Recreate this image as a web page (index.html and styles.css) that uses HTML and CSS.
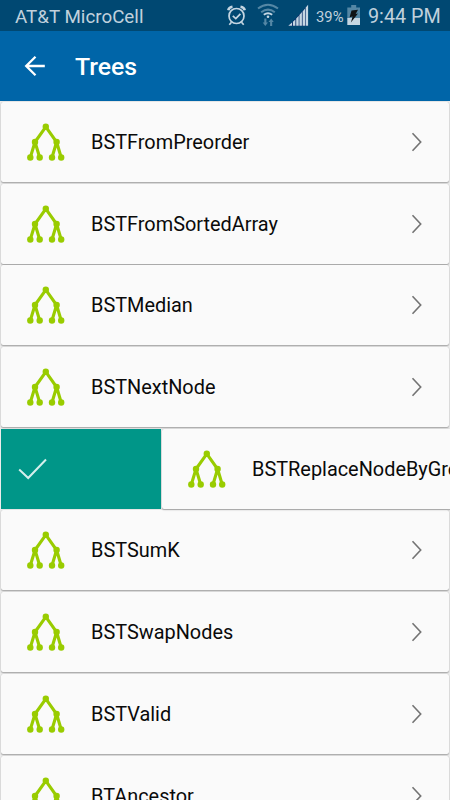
FILE: index.html
```html
<!DOCTYPE html>
<html lang="en">
<head>
<meta charset="utf-8">
<title>Trees</title>
<link rel="stylesheet" href="styles.css">
</head>
<body>
<svg class="defs" width="0" height="0">
  <symbol id="tree" viewBox="0 0 40 40">
    <path d="M19.8 4.8 9 20 4.3 35.5M9 20l4.7 15.5M19.8 4.8 30.6 20 26 35.5M30.6 20l4.6 15.5" fill="none" stroke="#99cc00" stroke-width="3.1"/>
    <g fill="#99cc00"><circle cx="19.8" cy="4.8" r="3.2"/><circle cx="9" cy="20" r="3.2"/><circle cx="30.6" cy="20" r="3.2"/><circle cx="4.3" cy="35.5" r="3.2"/><circle cx="13.7" cy="35.5" r="3.2"/><circle cx="26" cy="35.5" r="3.2"/><circle cx="35.2" cy="35.5" r="3.2"/></g>
  </symbol>
  <symbol id="chevron" viewBox="0 0 12 20"><path d="M1.5 1.3 9.7 10 1.5 18.7" fill="none" stroke="#737373" stroke-width="1.6"/></symbol>
</svg>
<div class="screen">
  <div class="status">
    <span class="carrier">AT&amp;T MicroCell</span>
    <svg class="indicators" width="84" height="31" viewBox="226 0 84 31">
      <g fill="none" stroke="#c5d6e2" stroke-width="1.7">
        <circle cx="236.5" cy="16" r="7.5"/>
        <path d="M232.8 15.8l3 2.8 4.6-4.8M231.5 22.3l-2.2 2.5M241.5 22.3l2.2 2.5"/>
        <path d="M228.3 10.2q.6-3 4.2-3.5M244.7 10.2q-.6-3-4.2-3.5" stroke-width="2.6"/>
      </g>
      <g fill="none" stroke-width="2">
        <path d="M258 8.5q10-7.6 20 0M261.2 12.2q6.8-5.2 13.6 0" stroke="#5487a5"/>
        <path d="M263.8 14.7q4.2-3 8.4 0" stroke="#c5d6e2"/>
      </g>
      <circle cx="268" cy="16.8" r="1.3" fill="#c5d6e2"/>
      <path d="M264.3 18.5h2.1v4h1.6l-2.7 3.5-2.6-3.5h1.6zM270.1 26h2.1v-4h1.5l-2.5-3.5-2.7 3.5h1.6z" fill="#5487a5"/>
      <path d="M288.5 26 308 5v21z" fill="#062b66"/>
      <path d="M288.3 25.8l3.7-3.2v3.2zM292.9 21.8l2.5-2.2v6.2h-2.5zM296.2 18.5l2.5-2.7v10h-2.5zM299.4 15.1l2.5-3v13.7h-2.5zM302.6 11.4l2.5-3v17.4h-2.5zM305.7 7.6l2.4-2.8v21h-2.4z" fill="#c5d6e2"/>
    </svg>
    <span class="percent">39%</span>
    <svg class="battery" width="14" height="21" viewBox="0 0 14 21">
      <path d="M4.2 0h5v2.5H13v11H.3v-11h3.9z" fill="#5487a5"/>
      <path d="M.3 13h12.7v7H.3z" fill="#c5d6e2"/>
      <path d="M4.5 5.5 11 4.8 8.7 9l2.3-.5L3.9 17.6 5.6 11.5l-3 .7z" fill="#101416"/>
    </svg>
    <span class="clock">9:44 PM</span>
  </div>
  <header class="toolbar">
    <svg class="back" width="22" height="22" viewBox="0 0 22 22"><path d="M20.8 11H2.3M11.5 1.7 2.2 11l9.3 9.3" fill="none" stroke="#fff" stroke-width="2.3"/></svg>
    <h1 class="title">Trees</h1>
  </header>
  <main class="list">
    <div class="row"><div class="card"><svg class="tree"><use href="#tree"/></svg><span class="name">BSTFromPreorder</span><svg class="chevron"><use href="#chevron"/></svg></div></div>
    <div class="row"><div class="card"><svg class="tree"><use href="#tree"/></svg><span class="name">BSTFromSortedArray</span><svg class="chevron"><use href="#chevron"/></svg></div></div>
    <div class="row"><div class="card"><svg class="tree"><use href="#tree"/></svg><span class="name">BSTMedian</span><svg class="chevron"><use href="#chevron"/></svg></div></div>
    <div class="row"><div class="card"><svg class="tree"><use href="#tree"/></svg><span class="name">BSTNextNode</span><svg class="chevron"><use href="#chevron"/></svg></div></div>
    <div class="row swiped">
      <div class="action"><svg width="30" height="22" viewBox="0 0 30 22"><path d="M1.2 11.5 10.2 20 28 1.5" fill="none" stroke="#d5efec" stroke-width="2"/></svg></div>
      <div class="card"><svg class="tree"><use href="#tree"/></svg><span class="name">BSTReplaceNodeByGreater</span></div>
    </div>
    <div class="row"><div class="card"><svg class="tree"><use href="#tree"/></svg><span class="name">BSTSumK</span><svg class="chevron"><use href="#chevron"/></svg></div></div>
    <div class="row"><div class="card"><svg class="tree"><use href="#tree"/></svg><span class="name">BSTSwapNodes</span><svg class="chevron"><use href="#chevron"/></svg></div></div>
    <div class="row"><div class="card"><svg class="tree"><use href="#tree"/></svg><span class="name">BSTValid</span><svg class="chevron"><use href="#chevron"/></svg></div></div>
    <div class="row"><div class="card"><svg class="tree"><use href="#tree"/></svg><span class="name">BTAncestor</span><svg class="chevron"><use href="#chevron"/></svg></div></div>
  </main>
</div>
</body>
</html>
```
FILE: styles.css
```css
* { box-sizing: border-box; }
body { margin: 0; font-family: Roboto, sans-serif; }
.defs { display: block; }
.screen {
  width: 450px;
  height: 800px;
  overflow: hidden;
  display: flex;
  flex-direction: column;
  background: #ececec;
}
.status {
  flex: none;
  height: 31px;
  display: flex;
  align-items: center;
  padding: 1px 0 0 15px;
  background: #004872;
  color: #c0d1dd;
  white-space: nowrap;
}
.carrier { flex: none; width: 211px; margin-top: 1px; font-size: 18.8px; }
.indicators { flex: none; margin-top: -1px; }
.percent { flex: none; width: 31px; margin: 1px 0 0 6px; font-size: 14.8px; }
.battery { flex: none; margin-top: -1px; }
.clock { margin: 1px 0 0 7px; font-size: 19.8px; }
.toolbar {
  flex: none;
  height: 70px;
  display: flex;
  align-items: center;
  padding-left: 24px;
  background: #0065a8;
}
.title { margin: 2px 0 0 29px; font-size: 24.8px; line-height: 30px; font-weight: 500; color: #fff; }
.list { padding-top: 1px; }
.row { height: 81.7px; padding: 0 1px; }
.card {
  height: 80px;
  display: flex;
  align-items: center;
  padding: 0 26px 0 25px;
  border-radius: 2px;
  background: #fafafa;
  box-shadow: 0 1px 1.5px rgba(0, 0, 0, .3), 0 0 1px rgba(0, 0, 0, .18);
}
.tree { flex: none; width: 40px; height: 40px; }
.name { flex: 1; margin: 2px 0 0 25px; font-size: 19.9px; line-height: 24px; color: #0a0a0a; white-space: nowrap; }
.chevron { flex: none; width: 12px; height: 20px; }
.swiped { display: flex; }
.swiped .card { flex: none; width: 448px; }
.action {
  flex: none;
  width: 160px;
  margin-right: 1px;
  height: 80px;
  display: flex;
  align-items: center;
  padding-left: 17px;
  background: #009688;
}
```
